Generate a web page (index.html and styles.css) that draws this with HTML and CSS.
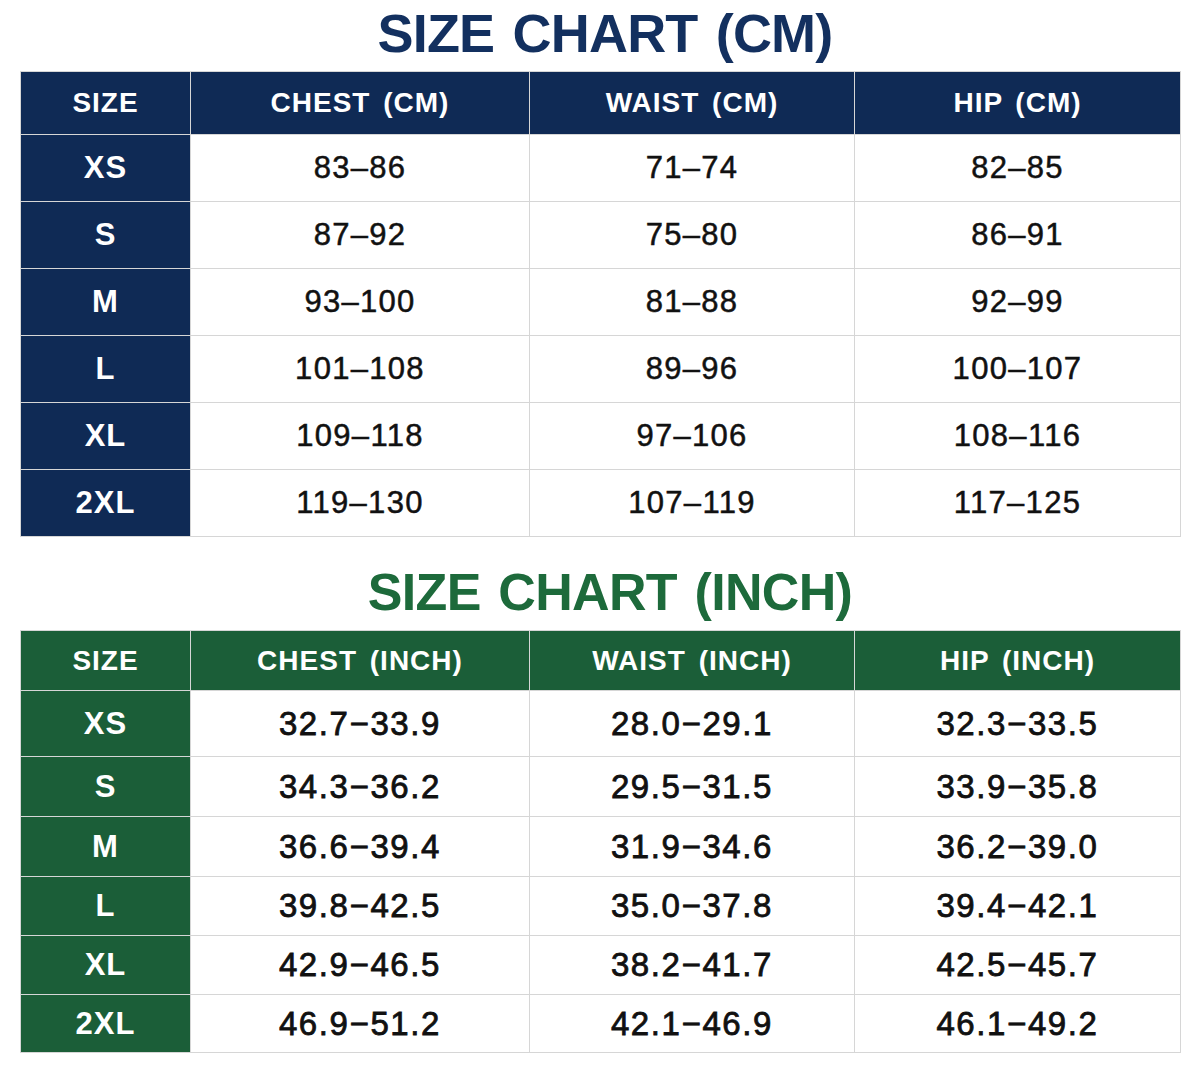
FILE: index.html
```html
<!DOCTYPE html>
<html>
<head>
<meta charset="utf-8">
<link rel="stylesheet" href="styles.css">
</head>
<body>
<div class="page">
  <h1 class="title navy-text">SIZE CHART (CM)</h1>
  <table class="chart navy cm">
    <colgroup><col class="c1"><col class="c2"><col class="c3"><col class="c4"></colgroup>
    <thead><tr><th>SIZE</th><th>CHEST (CM)</th><th>WAIST (CM)</th><th>HIP (CM)</th></tr></thead>
    <tbody>
      <tr><th>XS</th><td>83–86</td><td>71–74</td><td>82–85</td></tr>
      <tr><th>S</th><td>87–92</td><td>75–80</td><td>86–91</td></tr>
      <tr><th>M</th><td>93–100</td><td>81–88</td><td>92–99</td></tr>
      <tr><th>L</th><td>101–108</td><td>89–96</td><td>100–107</td></tr>
      <tr><th>XL</th><td>109–118</td><td>97–106</td><td>108–116</td></tr>
      <tr><th>2XL</th><td>119–130</td><td>107–119</td><td>117–125</td></tr>
    </tbody>
  </table>
  <h1 class="title green-text second">SIZE CHART (INCH)</h1>
  <table class="chart green inch">
    <colgroup><col class="c1"><col class="c2"><col class="c3"><col class="c4"></colgroup>
    <thead><tr><th>SIZE</th><th>CHEST (INCH)</th><th>WAIST (INCH)</th><th>HIP (INCH)</th></tr></thead>
    <tbody>
      <tr><th>XS</th><td>32.7−33.9</td><td>28.0−29.1</td><td>32.3−33.5</td></tr>
      <tr><th>S</th><td>34.3−36.2</td><td>29.5−31.5</td><td>33.9−35.8</td></tr>
      <tr><th>M</th><td>36.6−39.4</td><td>31.9−34.6</td><td>36.2−39.0</td></tr>
      <tr><th>L</th><td>39.8−42.5</td><td>35.0−37.8</td><td>39.4−42.1</td></tr>
      <tr><th>XL</th><td>42.9−46.5</td><td>38.2−41.7</td><td>42.5−45.7</td></tr>
      <tr><th>2XL</th><td>46.9−51.2</td><td>42.1−46.9</td><td>46.1−49.2</td></tr>
    </tbody>
  </table>
</div>
</body>
</html>
```
FILE: styles.css
```css
html, body {
  margin: 0;
  padding: 0;
  background: #ffffff;
}
.page {
  width: 1200px;
  padding: 0 20px;
  box-sizing: border-box;
  font-family: "Liberation Sans", Arial, sans-serif;
}
.title {
  margin: 0;
  text-align: center;
  font-weight: bold;
  font-size: 54px;
  letter-spacing: -0.8px;
  word-spacing: 4px;
  height: 71px;
  line-height: 66px;
  padding-left: 10px;
}
.title.second {
  height: 93px;
  line-height: 110px;
  font-size: 52px;
  letter-spacing: -0.7px;
  padding-left: 20px;
}
.navy-text { color: #13305f; }
.green-text { color: #1d6a3b; }

.chart {
  width: 1160px;
  border-collapse: collapse;
  table-layout: fixed;
}
.c1 { width: 170px; }
.c2 { width: 339px; }
.c3 { width: 325px; }
.c4 { width: 326px; }

.chart th, .chart td {
  border: 1.5px solid #d6d6d6;
  text-align: center;
  padding: 0;
}
.chart th {
  color: #ffffff;
  font-weight: bold;
}
.chart thead th {
  font-size: 28px;
  letter-spacing: 1px;
  word-spacing: 4px;
}
.chart tbody th {
  font-size: 31px;
  letter-spacing: 1px;
}
.chart td {
  color: #111111;
  background: #ffffff;
  -webkit-text-stroke: 0.5px #111111;
}
.navy th { background: #0f2a55; }
.green th { background: #1b5e38; }

.cm thead tr { height: 63px; }
.cm tbody tr { height: 67px; }
.cm td { font-size: 31px; letter-spacing: 1.3px; }

.inch thead tr { height: 60px; }
.inch tbody tr { height: 59px; }
.inch tbody tr:nth-child(1) { height: 66px; }
.inch tbody tr:nth-child(2),
.inch tbody tr:nth-child(3) { height: 60px; }
.inch tbody tr:nth-child(6) { height: 58px; }
.inch td { font-size: 33px; letter-spacing: 1.6px; -webkit-text-stroke: 0.8px #111111; }
```
